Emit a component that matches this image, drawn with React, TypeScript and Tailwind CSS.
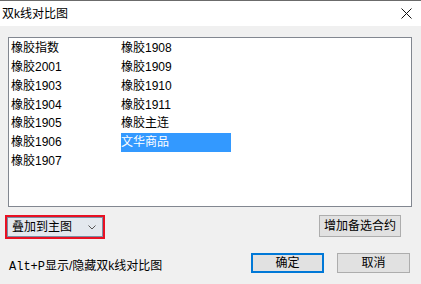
const col1 = ["橡胶指数", "橡胶2001", "橡胶1903", "橡胶1904", "橡胶1905", "橡胶1906", "橡胶1907"];
const col2 = ["橡胶1908", "橡胶1909", "橡胶1910", "橡胶1911", "橡胶主连", "文华商品"];
const selected = "文华商品";

const font = { fontFamily: '"Liberation Sans", "Noto Sans CJK SC", sans-serif' };

const Column = ({ items }: { items: string[] }) => (
  <div className="flex w-[110px] flex-col">
    {items.map((it) => (
      <div
        key={it}
        className={
          "flex h-[18.75px] items-center whitespace-nowrap text-[12px] leading-none " +
          (it === selected ? "bg-[#3399ff] text-white" : "text-black")
        }
      >
        {it}
      </div>
    ))}
  </div>
);

export default function App() {
  return (
    <div className="flex h-[284px] w-[421px] flex-col bg-[#f0f0f0]" style={font}>
      {/* title bar */}
      <div className="flex h-[26px] items-center justify-between border-t border-[#6b6b6b] bg-white pl-[2px] pr-[9px]">
        <span className="text-[12px] text-black">双k线对比图</span>
        <svg width="11" height="11" viewBox="0 0 11 11">
          <path d="M0.5 0.5 L10.5 10.5 M10.5 0.5 L0.5 10.5" stroke="#111" strokeWidth="1" />
        </svg>
      </div>

      {/* list */}
      <div className="mx-[8px] mt-[11px] flex h-[170px] w-[404px] border border-[#828790] bg-white pl-[2px] pt-[1px]">
        <Column items={col1} />
        <Column items={col2} />
      </div>

      {/* row 2 */}
      <div className="mt-[8px] flex h-[24px] items-start justify-between pl-[5px] pr-[20px]">
        <div className="h-[24px] w-[100px] border-2 border-[#e81123] p-0">
          <div className="flex h-full items-center justify-between border border-[#7a8ea4] bg-[#e3e8ee] pl-[4px] pr-[6px]">
            <span className="text-[12px] text-black">叠加到主图</span>
            <svg width="8" height="5" viewBox="0 0 8 5">
              <path d="M0.5 0.5 L4 4 L7.5 0.5" stroke="#555" strokeWidth="1" fill="none" />
            </svg>
          </div>
        </div>
        <button className="flex h-[22px] w-[82px] items-center justify-center border border-[#adadad] bg-[#e1e1e1] text-[12px] text-black">
          增加备选合约
        </button>
      </div>

      {/* row 3 */}
      <div className="mt-[14px] flex h-[20px] items-center pl-[9px] pr-[11px]">
        <span className="mt-[6px] text-[12px] text-black">
          <span style={{ fontFamily: '"Liberation Mono", monospace' }}>Alt+P</span>显示/隐藏双k线对比图
        </span>
        <button className="ml-auto flex h-[20px] w-[73px] items-center justify-center border-2 border-[#0078d7] bg-[#e1e1e1] text-[12px] text-black">
          确定
        </button>
        <button className="ml-[13px] flex h-[20px] w-[73px] items-center justify-center border border-[#adadad] bg-[#e1e1e1] text-[12px] text-black">
          取消
        </button>
      </div>
    </div>
  );
}
